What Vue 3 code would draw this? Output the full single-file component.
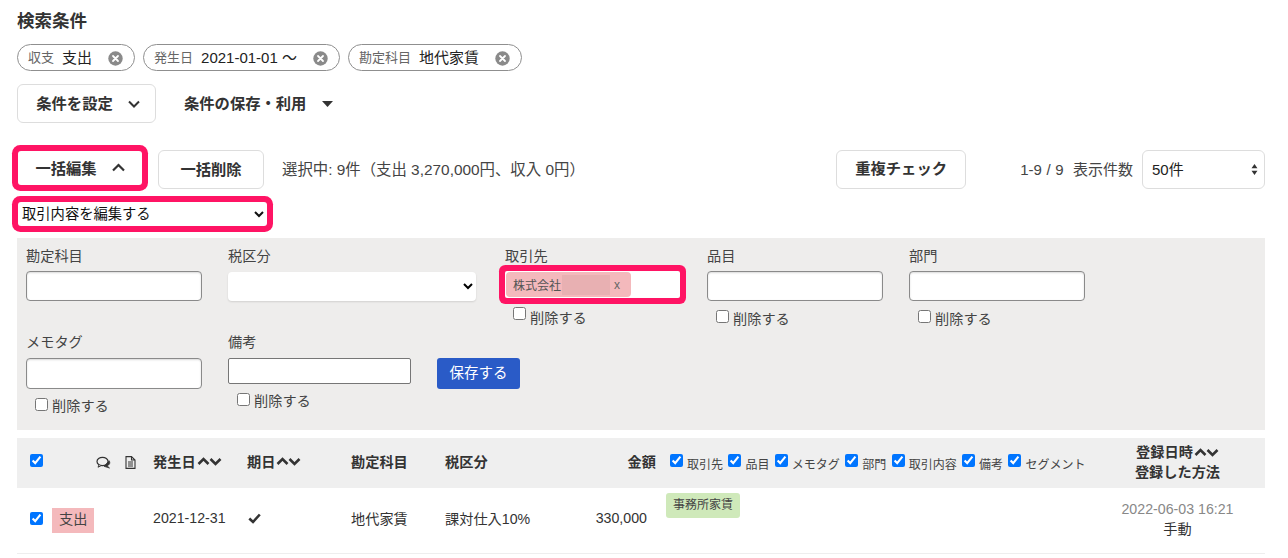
<script setup>
const chips = [
  { label: '収支', value: '支出' },
  { label: '発生日', value: '2021-01-01 〜' },
  { label: '勘定科目', value: '地代家賃' }
]
const toggles = ['取引先', '品目', 'メモタグ', '部門', '取引内容', '備考', 'セグメント']
</script>

<template>
  <main class="page">
    <h2 class="title">検索条件</h2>
    <div class="chips">
      <div v-for="c in chips" :key="c.label" class="chip">
        <span class="chip-label">{{ c.label }}</span>
        <span class="chip-value">{{ c.value }}</span>
        <svg class="chip-x" width="15" height="15" viewBox="0 0 15 15">
          <circle cx="7.5" cy="7.5" r="7.2" fill="#8a8a8a" />
          <path d="M5 5l5 5M10 5l-5 5" stroke="#fff" stroke-width="1.8" stroke-linecap="round" />
        </svg>
      </div>
    </div>

    <div class="cond-row">
      <button class="btn btn-cond">
        条件を設定
        <svg width="12" height="8" viewBox="0 0 12 8"><path d="M1 1.5l5 5 5-5" fill="none" stroke="#333" stroke-width="2" /></svg>
      </button>
      <button class="btn-plain">
        条件の保存・利用
        <svg width="11" height="6" viewBox="0 0 11 6"><path d="M0 0h11L5.5 6z" fill="#333" /></svg>
      </button>
    </div>

    <div class="bulk-row">
      <button class="btn btn-bulk hl">
        一括編集
        <svg width="13" height="9" viewBox="0 0 13 9"><path d="M1 7.5l5.5-5.5 5.5 5.5" fill="none" stroke="#333" stroke-width="2.2" /></svg>
      </button>
      <button class="btn btn-del">一括削除</button>
      <span class="selected">選択中: 9件（支出 3,270,000円、収入 0円）</span>
      <button class="btn btn-dup">重複チェック</button>
      <span class="count">1-9 / 9&nbsp;&nbsp;表示件数</span>
      <div class="per-page">
        <select class="per-select"><option>50件</option></select>
        <svg class="per-arrows" width="7" height="11" viewBox="0 0 8 13"><path d="M4 0l3.5 5h-7zM4 13L.5 8h7z" fill="#333" /></svg>
      </div>
    </div>

    <div class="edit-select-row">
      <select class="edit-select hl"><option>取引内容を編集する</option></select>
    </div>

    <section class="panel">
      <div class="panel-row first">
        <div class="field">
          <label class="lbl">勘定科目</label>
          <input class="inp" type="text" />
        </div>
        <div class="field wide">
          <label class="lbl">税区分</label>
          <select class="tax"><option></option></select>
        </div>
        <div class="field">
          <label class="lbl">取引先</label>
          <div class="partner hl">
            <span class="partner-chip">
              <span>株式会社</span><i class="mask"></i><span class="partner-x">x</span>
            </span>
          </div>
          <label class="del del-partner"><input type="checkbox" /><span>削除する</span></label>
        </div>
        <div class="field">
          <label class="lbl">品目</label>
          <input class="inp" type="text" />
          <label class="del"><input type="checkbox" /><span>削除する</span></label>
        </div>
        <div class="field">
          <label class="lbl">部門</label>
          <input class="inp" type="text" />
          <label class="del"><input type="checkbox" /><span>削除する</span></label>
        </div>
      </div>
      <div class="panel-row second">
        <div class="field">
          <label class="lbl">メモタグ</label>
          <input class="inp" type="text" />
          <label class="del"><input type="checkbox" /><span>削除する</span></label>
        </div>
        <div class="field note">
          <label class="lbl">備考</label>
          <input class="inp-note" type="text" />
          <label class="del"><input type="checkbox" /><span>削除する</span></label>
        </div>
        <button class="save">保存する</button>
      </div>
    </section>

    <section class="table">
      <div class="grid head">
        <div class="c-check">
          <input type="checkbox" checked />
          <svg class="ic-chat" width="15" height="13" viewBox="0 0 15 13">
            <ellipse cx="6.5" cy="5.5" rx="5.5" ry="4.2" fill="none" stroke="#333" stroke-width="1.2" />
            <path d="M13 4.5c1.5 2 .8 4.5-2 5.2L13.5 12 8 10.3" fill="#333" stroke="#333" stroke-width=".8" />
            <path d="M3 9l-1 2.200 3-1.500" fill="#fff" stroke="#333" stroke-width="1" />
          </svg>
          <svg class="ic-doc" width="11" height="13" viewBox="0 0 11 13">
            <path d="M1 .6h5.500L10 4v8.400H1z M6.500.6V4H10" fill="none" stroke="#333" stroke-width="1.100" />
            <path d="M3 6h5M3 8h5M3 10h5" stroke="#333" stroke-width="1" />
          </svg>
        </div>
        <div class="hd sort">発生日
          <svg class="sort-ic" width="25" height="10" viewBox="0 0 25 10"><path d="M1.500 8l5-5 5 5M13.500 3l5 5 5-5" fill="none" stroke="#333" stroke-width="2.600" /></svg>
        </div>
        <div class="hd sort">期日
          <svg class="sort-ic" width="25" height="10" viewBox="0 0 25 10"><path d="M1.500 8l5-5 5 5M13.500 3l5 5 5-5" fill="none" stroke="#333" stroke-width="2.600" /></svg>
        </div>
        <div class="hd">勘定科目</div>
        <div class="hd">税区分</div>
        <div class="hd amount">金額</div>
        <div class="toggles">
          <label v-for="t in toggles" :key="t" class="toggle"><input type="checkbox" checked /><span>{{ t }}</span></label>
        </div>
        <div class="hd reg">
          <div class="sort reg-top">登録日時
            <svg class="sort-ic" width="25" height="10" viewBox="0 0 25 10"><path d="M1.500 8l5-5 5 5M13.500 3l5 5 5-5" fill="none" stroke="#333" stroke-width="2.600" /></svg>
          </div>
          <div>登録した方法</div>
        </div>
      </div>
      <div class="grid row">
        <div class="c-check">
          <input type="checkbox" checked />
          <span class="badge">支出</span>
        </div>
        <div class="txt">2021-12-31</div>
        <div class="due txt">
          <svg width="13" height="11" viewBox="0 0 13 11"><path d="M1.300 5.500L5 9l6.800-7.500" fill="none" stroke="#333" stroke-width="2.600" /></svg>
        </div>
        <div class="txt">地代家賃</div>
        <div class="txt">課対仕入10%</div>
        <div class="amount amount-val txt">330,000</div>
        <div class="tag-cell"><span class="tag">事務所家賃</span></div>
        <div class="reg reg-body">
          <div class="reg-date">2022-06-03 16:21</div>
          <div>手動</div>
        </div>
      </div>
    </section>
  </main>
</template>

<style>
html, body { margin: 0; background: #fff; overflow: hidden; }
</style>

<style scoped>
.page {
  box-sizing: border-box;
  width: 1288px;
  padding: 12px 23px 0 17px;
  font-family: "Liberation Sans", "Noto Sans CJK JP", sans-serif;
  font-size: 14.2px;
  color: #333;
}
.title { margin: -1px 0 0; font-size: 17.5px; line-height: 20px; font-weight: 700; }
.chips { display: flex; gap: 8px; margin-top: 13px; }
.chip {
  display: flex; align-items: center; height: 27px; box-sizing: border-box;
  padding: 0 11px 0 10px; border: 1px solid #8f8f8f; border-radius: 14px;
}
.chip-label { font-size: 13px; color: #666; margin-right: 8px; padding-bottom: 3px; }
.chip-value { font-size: 15px; color: #222; padding-bottom: 3px; }
.chip-x { margin-left: 16px; margin-top: 1px; }

button { font-family: inherit; cursor: pointer; }
.btn {
  display: flex; align-items: center; justify-content: center; box-sizing: border-box;
  height: 39px; background: #fff; border: 1px solid #ddd; border-radius: 6px;
  font-size: 15.3px; font-weight: 700; color: #333; padding: 0 0 4px;
}
.cond-row { display: flex; align-items: center; margin-top: 13px; }
.btn-cond { width: 139px; gap: 15px; padding-left: 3px; }
.btn svg, .btn-plain svg { margin-top: 4px; }
.btn-plain {
  display: flex; align-items: center; gap: 16px; margin-left: 28px; padding: 0 0 4px;
  background: none; border: 0; font-size: 15.3px; font-weight: 700; color: #333;
}

.hl { box-shadow: 0 0 0 6px #ff1464; border-radius: 3px; }
.bulk-row { display: flex; align-items: center; height: 39px; margin-top: 27px; }
.btn-bulk { width: 124px; height: 34px; margin: -3px 16px 0 1px; gap: 15px; border: 0; padding: 0 0 2px; }
.btn-bulk svg { margin-top: 1px; }
.btn-del { width: 106px; }
.selected { margin-left: 18px; font-size: 15.4px; color: #444; padding-bottom: 4px; }
.btn-dup { width: 130px; margin-left: auto; padding-bottom: 6px; }
.count { margin-left: 54px; font-size: 15px; color: #444; padding-bottom: 2px; word-spacing: .5px; }
.per-page { position: relative; margin-left: 9px; }
.per-select {
  appearance: none; box-sizing: border-box; display: block; width: 123px; height: 39px;
  padding: 0 9px; border: 1px solid #ddd; border-radius: 6px; background: #fff;
  font: inherit; font-size: 15px; color: #222;
}
.per-arrows { position: absolute; right: 7px; top: 14px; pointer-events: none; }

.edit-select-row { margin-top: 13px; padding-left: 1px; height: 24px; }
.edit-select {
  display: block; box-sizing: border-box; width: 249px; height: 24px; padding: 0;
  border: 0; background: #fff; font: inherit; font-size: 14.3px; color: #111; outline: none;
}

.panel {
  margin-top: 12px; height: 192px; box-sizing: border-box; padding: 9px 9px 0;
  background: #eeedec;
}
.panel-row { display: flex; align-items: flex-start; gap: 26px; }
.second { margin-top: 5px; }
.field { width: 176px; }
.wide { width: 251px; }
.note { width: 183px; }
.lbl { display: block; line-height: 18px; height: 18px; color: #444; }
.inp {
  display: block; box-sizing: border-box; width: 176px; height: 30px; margin-top: 6px;
  border: 1px solid #8a8a8a; border-radius: 4px; background: #fff;
  box-shadow: inset 0 1px 2px rgba(0, 0, 0, .15);
}
.second .inp { height: 31px; margin-top: 7px; }
.inp-note {
  display: block; box-sizing: border-box; width: 183px; height: 26px; margin-top: 7px;
  border: 1px solid #767676; border-radius: 2px; background: #fff;
}
.tax {
  display: block; box-sizing: border-box; width: 248px; height: 29px; margin-top: 7px;
  border: 0; border-radius: 4px; background: #fff; box-shadow: 0 1px 2px rgba(0, 0, 0, .12);
  font: inherit;
}
.partner {
  box-sizing: border-box; width: 175px; height: 27px; margin-top: 6px; padding: 1px;
  background: #fff; border-radius: 2px;
}
.partner-chip {
  display: flex; align-items: center; box-sizing: border-box; width: 125px; height: 25px;
  padding-left: 7px; background: #f4b9bc; border-radius: 4px; font-size: 12px; color: #555;
}
.mask { display: block; width: 48px; height: 20px; margin-left: 1px; background: #e8b0b2; }
.partner-x { margin-left: 4px; color: #666; }
.del {
  display: flex; align-items: flex-start; margin-top: 8px; padding-left: 9px; line-height: 18px; color: #444;
}
.del-partner { padding-left: 8px; }
.del input { width: 13px; height: 13px; margin: 1px 4px 0 0; }
.del span { display: block; margin-top: 1px; }
.second .del span { margin-top: 0; }
.del-partner span { margin-top: 3px; }
.save {
  width: 83px; height: 31px; margin-top: 25px; padding: 0 0 5px; border: 0; border-radius: 3px;
  background: #2a5bc7; color: #fff; font-size: 14.5px;
}

.table { margin-top: 8px; }
.grid {
  display: grid;
  grid-template-columns: 136px 94px 104px 94px 100px 115px 430px 175px;
  align-items: center;
}
.head { height: 50px; background: #efefef; }
.row { height: 66px; box-sizing: border-box; border-bottom: 1px solid #eee; color: #333; }
.c-check { display: flex; align-items: center; padding-left: 13px; }
.c-check input { width: 13px; height: 13px; margin: 0; accent-color: #0075ff; }
.head .c-check { padding-bottom: 2px; }
.head .c-check input { margin-top: -3px; }
.row .c-check { padding-bottom: 3px; }
.row .c-check input { margin-top: -1px; }
.ic-chat { margin-left: 53px; }
.ic-doc { margin-left: 14px; }
.hd { font-weight: 700; color: #333; padding-bottom: 4px; }
.sort { display: flex; align-items: center; }
.sort-ic { margin-left: 1px; }
.amount { text-align: right; }
.head .amount { padding-right: 4px; }
.amount-val { padding-right: 13px; }
.txt { padding-bottom: 5px; }
.toggles { display: flex; align-items: center; padding-left: 10px; gap: 5.4px; font-size: 12px; }
.toggle { display: flex; align-items: center; gap: 4px; color: #444; white-space: nowrap; }
.toggle input { width: 13px; height: 13px; margin: -5px 0 0; accent-color: #0075ff; }
.toggle span { margin-top: 0; }
.reg { text-align: center; line-height: 20px; }
.hd.reg { padding-bottom: 2px; }
.reg-top { justify-content: center; padding-bottom: 0; }
.reg-body { padding-bottom: 3px; }
.reg-date { color: #888; }
.badge {
  display: block; height: 25px; line-height: 23px; margin-left: 9px; padding: 0 7px;
  background: #f4b9bc; color: #444; margin-top: 3px;
}
.due { display: flex; align-items: center; padding-left: 1px; }
.tag-cell { align-self: start; padding: 5px 0 0 6px; }
.tag {
  display: inline-block; height: 25px; line-height: 25px; padding: 0 7px;
  background: #cfe9ba; border-radius: 3px; font-size: 12px; color: #444;
}
</style>
